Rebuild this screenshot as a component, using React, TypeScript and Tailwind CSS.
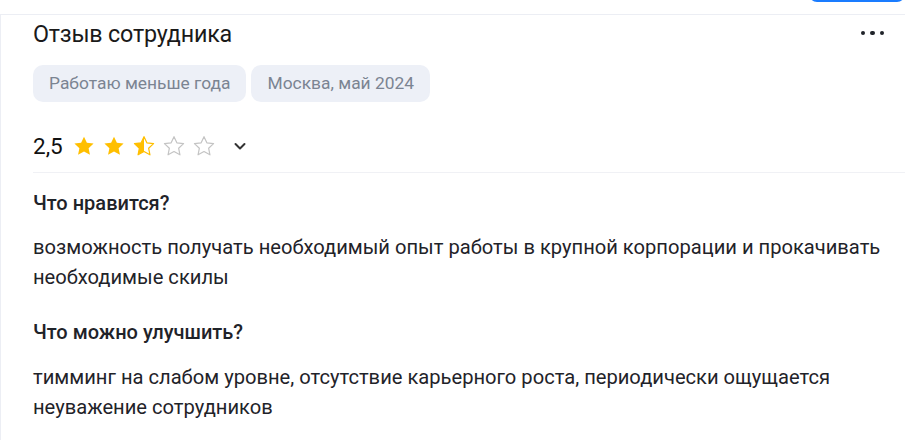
import React from "react";

const STAR = "M10 1.5l2.6 5.6 6.1.7-4.5 4.2 1.2 6L10 15l-5.4 3 1.2-6L1.3 7.8l6.1-.7z";

function Star({ kind }: { kind: "full" | "half" | "empty" }) {
  const id = "half-clip";
  return (
    <svg width="22" height="22" viewBox="0 0 20 20" className="block">
      {kind === "full" && <path d={STAR} fill="#ffbf00" />}
      {kind === "empty" && (
        <path d={STAR} fill="none" stroke="#c4c4c4" strokeWidth="1.1" strokeLinejoin="round" />
      )}
      {kind === "half" && (
        <>
          <defs>
            <clipPath id={id}>
              <rect x="0" y="0" width="10" height="20" />
            </clipPath>
          </defs>
          <path d={STAR} fill="none" stroke="#ffbf00" strokeWidth="1.1" strokeLinejoin="round" />
          <path d={STAR} fill="#ffbf00" clipPath={`url(#${id})`} />
        </>
      )}
    </svg>
  );
}

export default function App() {
  return (
    <div className="relative w-[905px] h-[440px] overflow-hidden bg-white font-['Roboto',sans-serif]">
      <div className="absolute right-0 top-[-20px] h-[22px] w-[96px] rounded-[8px] bg-[#1a7cff]" />
      <div className="mt-[14px] border-l border-t border-[#eceef4] pl-[32px] pt-[4px] h-[430px]">
        <div className="flex items-center justify-between pr-[21px]">
          <h1 className="text-[23.3px] leading-[30px] text-[#1a1a1a] tracking-[-0.2px]">Отзыв сотрудника</h1>
          <div className="flex gap-[5px] items-center mt-[-2px]">
            <span className="w-[4.5px] h-[4.5px] rounded-full bg-[#1f2329]" />
            <span className="w-[4.5px] h-[4.5px] rounded-full bg-[#1f2329]" />
            <span className="w-[4.5px] h-[4.5px] rounded-full bg-[#1f2329]" />
          </div>
        </div>
        <div className="mt-[16px] flex gap-[5px]">
          <span className="h-[37px] px-[16px] flex items-center rounded-[10px] bg-[#edf0f7] text-[17.4px] text-[#7b8492]">
            Работаю меньше года
          </span>
          <span className="h-[37px] px-[16px] flex items-center rounded-[10px] bg-[#edf0f7] text-[17.4px] text-[#7b8492]">
            Москва, май 2024
          </span>
        </div>
        <div className="mt-[29px] flex items-center">
          <span className="text-[22.5px] leading-[30px] text-[#111] mr-[10px]">2,5</span>
          <div className="flex gap-[8px]">
            <Star kind="full" />
            <Star kind="full" />
            <Star kind="half" />
            <Star kind="empty" />
            <Star kind="empty" />
          </div>
          <svg width="14" height="14" viewBox="0 0 14 14" className="ml-[18px]">
            <path d="M2.5 5l4.5 4.5L11.5 5" fill="none" stroke="#333" strokeWidth="2" strokeLinecap="round" strokeLinejoin="round" />
          </svg>
        </div>
        <div className="mt-[11px] border-t border-[#f0f1f5]" />
        <div className="mt-[16px] text-[20px] font-medium leading-[28px] text-[#1f2329]">Что нравится?</div>
        <p className="mt-[15px] text-[20.15px] leading-[30px] text-[#1f2329] pr-[10px]">
          возможность получать необходимый опыт работы в крупной корпорации и прокачивать необходимые скилы
        </p>
        <div className="mt-[26px] text-[20px] font-medium leading-[28px] text-[#1f2329]">Что можно улучшить?</div>
        <p className="mt-[16px] text-[20.15px] leading-[30px] text-[#1f2329] pr-[10px]">
          тимминг на слабом уровне, отсутствие карьерного роста, периодически ощущается неуважение сотрудников
        </p>
      </div>
    </div>
  );
}
